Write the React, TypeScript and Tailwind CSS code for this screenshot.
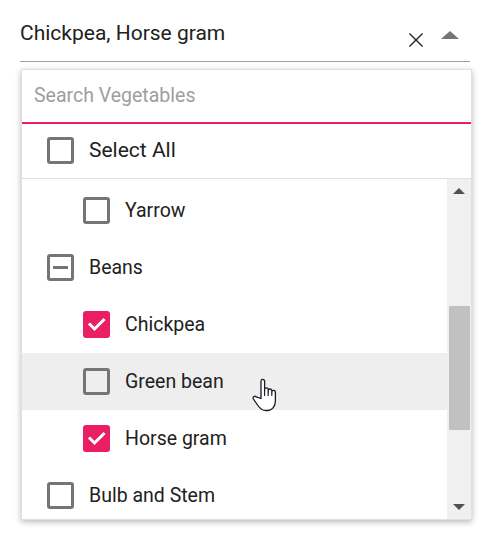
import React from "react";

type CheckState = "checked" | "unchecked" | "indeterminate";

function Check({ state }: { state: CheckState }) {
  if (state === "checked") {
    return (
      <div className="w-[27px] h-[27px] rounded-[3px] bg-[#e91e63] flex items-center justify-center shrink-0">
        <svg width="27" height="27" viewBox="0 0 27 27">
          <path d="M7 13.5 L11.5 18 L20.5 9" fill="none" stroke="#ffffff" strokeWidth="3" strokeLinecap="square" />
        </svg>
      </div>
    );
  }
  if (state === "indeterminate") {
    return (
      <div className="w-[27px] h-[27px] rounded-[3px] border-[3px] border-[#757575] flex items-center justify-center shrink-0">
        <div className="w-[15px] h-[3px] bg-[#757575]" />
      </div>
    );
  }
  return <div className="w-[27px] h-[27px] rounded-[3px] border-[3px] border-[#757575] shrink-0" />;
}

function Row({ label, level, state, hover }: { label: string; level: 0 | 1; state: CheckState; hover?: boolean }) {
  return (
    <div
      className={`h-[57px] flex items-center gap-[15px] ${level === 0 ? "pl-[25px]" : "pl-[61px]"} ${hover ? "bg-[#eeeeee]" : ""}`}
    >
      <Check state={state} />
      <span className="text-[19.5px] text-[#212121] leading-none">{label}</span>
    </div>
  );
}

export default function App() {
  return (
    <div className="relative w-[497px] h-[540px] bg-white font-['Roboto',sans-serif] overflow-hidden">
      {/* Input */}
      <div className="ml-[20px] w-[450px] h-[62px] border-b border-[#9e9e9e] flex items-start pt-[19px]">
        <span className="text-[21px] text-[#212121] leading-[28px] flex-1">Chickpea, Horse gram</span>
        <svg width="16" height="16" viewBox="0 0 16 16" className="mt-[13px] mr-[17px]">
          <path d="M1.5 1.5 L14.5 14.5 M14.5 1.5 L1.5 14.5" stroke="#1f1f1f" strokeWidth="1.4" />
        </svg>
        <svg width="18" height="8" viewBox="0 0 18 8" className="mt-[12px] mr-[11px]">
          <path d="M9 0 L18 8 L0 8 Z" fill="#757575" />
        </svg>
      </div>

      {/* Popup */}
      <div className="ml-[21px] mt-[7px] w-[451px] h-[451px] bg-white shadow-[0_2px_6px_rgba(0,0,0,0.28)] border border-[#e0e0e0] flex flex-col">
        <div className="h-[54px] border-b-2 border-[#e91e63] flex items-center pl-[12px] shrink-0">
          <span className="text-[19.5px] text-[#9e9e9e] leading-none">Search Vegetables</span>
        </div>
        <div className="h-[55px] border-b border-[#e0e0e0] shrink-0 flex items-center pb-[2px]">
          <div className="flex items-center gap-[15px] pl-[25px]">
            <Check state="unchecked" />
            <span className="text-[21px] text-[#212121] leading-none">Select All</span>
          </div>
        </div>
        <div className="flex-1 flex min-h-0">
          <div className="flex-1 overflow-hidden pt-[3px]">
            <Row label="Yarrow" level={1} state="unchecked" />
            <Row label="Beans" level={0} state="indeterminate" />
            <Row label="Chickpea" level={1} state="checked" />
            <Row label="Green bean" level={1} state="unchecked" hover />
            <Row label="Horse gram" level={1} state="checked" />
            <Row label="Bulb and Stem" level={0} state="unchecked" />
          </div>
          <div className="w-[24px] bg-[#f0f0f0] flex flex-col items-center relative">
            <svg width="12" height="6" viewBox="0 0 12 6" className="mt-[9px]">
              <path d="M6 0 L12 6 L0 6 Z" fill="#505050" />
            </svg>
            <div className="absolute left-[2px] top-[127px] w-[21px] h-[124px] bg-[#c1c1c1]" />
            <svg width="12" height="6" viewBox="0 0 12 6" className="mt-auto mb-[9px]">
              <path d="M0 0 L12 0 L6 6 Z" fill="#505050" />
            </svg>
          </div>
        </div>
      </div>

      {/* Hand cursor */}
      <svg width="28" height="34" viewBox="0 0 28 34" className="absolute left-[252px] top-[378px]">
        <path
          d="M9 17 V3.2 a1.8 1.8 0 0 1 3.6 0 V13 V11.6 a1.8 1.8 0 0 1 3.6 0 V14 V12.8 a1.8 1.8 0 0 1 3.6 0 V15 V14.2 a1.8 1.8 0 0 1 3.6 0 V23 c0 5 -3 9.5 -8 9.5 h-1.5 c-4 0 -6 -2 -8 -5 l-4.5 -6.5 a1.8 1.8 0 0 1 2.8 -2.2 L9 20.5 Z"
          fill="#ffffff"
          stroke="#1a1a2a"
          strokeWidth="1.3"
          strokeLinejoin="round"
        />
        <path d="M12.6 13 V18 M16.2 14 V18 M19.8 15 V18" stroke="#1a1a2a" strokeWidth="1.1" />
      </svg>
    </div>
  );
}
